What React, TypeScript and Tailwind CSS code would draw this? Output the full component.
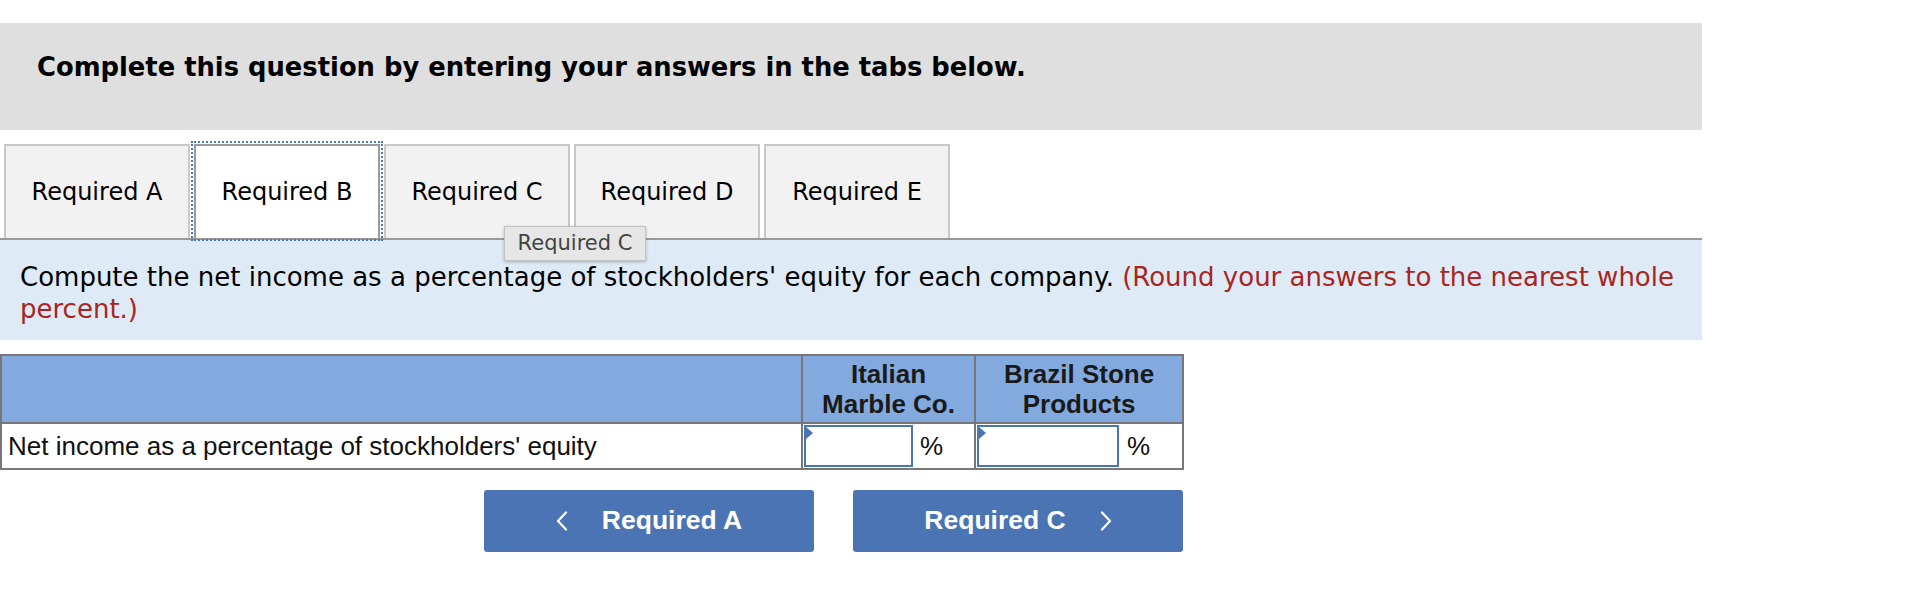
const tabs = ['Required A', 'Required B', 'Required C', 'Required D', 'Required E']

function PctInput({ width }: { width: string }) {
  return (
    <div className={`relative h-[42px] ${width} border-2 border-[#4a75b5] bg-white`}>
      <div className="absolute left-0 top-0 w-0 h-0 border-t-[6px] border-b-[6px] border-l-[7px] border-t-transparent border-b-transparent border-l-[#4a75b5]" />
    </div>
  )
}

function Chevron({ dir }: { dir: 'left' | 'right' }) {
  return (
    <svg width="12" height="20" viewBox="0 0 12 20" fill="none" stroke="white" strokeWidth="2.2" strokeLinecap="round" strokeLinejoin="round">
      {dir === 'left' ? <polyline points="10,1.5 2,10 10,18.5" /> : <polyline points="2,1.5 10,10 2,18.5" />}
    </svg>
  )
}

export default function App() {
  const verdana = { fontFamily: '"DejaVu Sans", Verdana, sans-serif' }
  const arial = { fontFamily: '"Liberation Sans", Arial, sans-serif' }

  return (
    <div className="w-[1920px] h-[604px] bg-white pt-[23px] overflow-hidden">
      <div className="w-[1702px]">
        <div className="h-[107px] bg-[#dfdfdf] pl-[37px] pt-[29px]" style={verdana}>
          <h2 className="text-[25.8px] leading-[30px] font-bold text-black">
            Complete this question by entering your answers in the tabs below.
          </h2>
        </div>

        <div className="relative mt-[14px]">
          <div className="flex gap-[4px] pl-[4px]" style={verdana}>
            {tabs.map((t) => {
              const active = t === 'Required B'
              return (
                <div
                  key={t}
                  className={
                    active
                      ? 'w-[186px] h-[94px] flex items-center justify-center bg-white border-2 border-b-0 border-[#9a9a9a] outline-2 outline-dotted outline-offset-1 outline-[#4a78c2] text-[24px] text-black'
                      : 'w-[186px] h-[94px] flex items-center justify-center bg-[#f2f2f2] border-2 border-b-0 border-[#c8c8c8] text-[24px] text-black'
                  }
                >
                  {t}
                </div>
              )
            })}
          </div>

          <div className="border-t-2 border-[#999] bg-[#deeaf6] pt-[21px] pb-[15px] pl-[20px] pr-[8px]" style={verdana}>
            <p className="text-[26px] leading-[32px] text-black">
              Compute the net income as a percentage of stockholders' equity for each company.{' '}
              <span className="text-[#a8261f]">(Round your answers to the nearest whole percent.)</span>
            </p>
          </div>

          <div
            className="absolute left-[504px] top-[82px] w-[142px] h-[35px] flex items-center justify-center bg-[#e6e6e6] border border-[#c2c2c2] shadow-[0_1px_3px_rgba(0,0,0,0.25)] text-[21px] text-[#444]"
            style={verdana}
          >
            Required C
          </div>
        </div>

        <table className="mt-[14px] w-[1182px] border-collapse border-2 border-[#777] table-fixed" style={arial}>
          <colgroup>
            <col className="w-[801px]" />
            <col className="w-[110px]" />
            <col className="w-[63px]" />
            <col className="w-[144px]" />
            <col className="w-[64px]" />
          </colgroup>
          <thead>
            <tr className="h-[68px] bg-[#83aadf]">
              <th className="border-2 border-[#777]" />
              <th colSpan={2} className="border-2 border-[#777] text-[26px] leading-[30px] font-bold text-[#1a1a1a] text-center">
                Italian
                <br />
                Marble Co.
              </th>
              <th colSpan={2} className="border-2 border-[#777] text-[26px] leading-[30px] font-bold text-[#1a1a1a] text-center">
                Brazil Stone
                <br />
                Products
              </th>
            </tr>
          </thead>
          <tbody>
            <tr className="h-[46px]">
              <td className="border-2 border-[#777] pl-[6px] text-[26px] text-[#111]">
                Net income as a percentage of stockholders' equity
              </td>
              <td className="p-0 pl-[1px]">
                <PctInput width="w-[109px]" />
              </td>
              <td className="border-r-2 border-[#777] pl-[8px] text-[26px] text-[#111]">%</td>
              <td className="p-0 pl-[1px]">
                <PctInput width="w-[142px]" />
              </td>
              <td className="pl-[8px] text-[26px] text-[#111]">%</td>
            </tr>
          </tbody>
        </table>

        <div className="flex gap-[39px] pl-[484px] mt-[20px]" style={arial}>
          <button className="w-[330px] h-[62px] rounded-[3px] bg-[#4a74b4] text-white text-[26.5px] font-bold flex items-center justify-center gap-[34px]">
            <Chevron dir="left" />
            Required A
          </button>
          <button className="w-[330px] h-[62px] rounded-[3px] bg-[#4a74b4] text-white text-[26.5px] font-bold flex items-center justify-center gap-[34px]">
            Required C
            <Chevron dir="right" />
          </button>
        </div>
      </div>
    </div>
  )
}
